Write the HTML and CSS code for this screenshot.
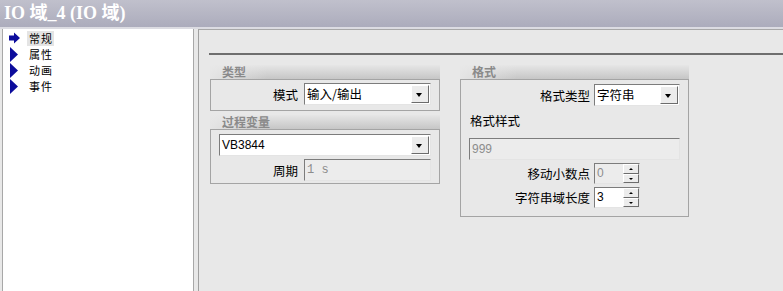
FILE: index.html
```html
<!DOCTYPE html>
<html lang="zh">
<head>
<meta charset="UTF-8">
<title>IO 域_4 (IO 域)</title>
<link rel="stylesheet" href="styles.css">
</head>
<body>
    <div class="titlebar">IO 域_4 (IO 域)</div>
    <div class="main">
        <ul class="tree">
            <li class="tree-item selected">
                <svg class="arrow" width="12" height="12" viewBox="0 0 12 12"><polygon points="0,3.5 5,3.5 5,0.5 11,6 5,11.5 5,8.5 0,8.5" fill="#0c0c9c"/></svg>
                <span>常规</span>
            </li>
            <li class="tree-item">
                <svg class="arrow" width="12" height="15" viewBox="0 0 12 15"><polygon points="1,0 9,7.5 1,15" fill="#0c0c9c"/></svg>
                <span>属性</span>
            </li>
            <li class="tree-item">
                <svg class="arrow" width="12" height="15" viewBox="0 0 12 15"><polygon points="1,0 9,7.5 1,15" fill="#0c0c9c"/></svg>
                <span>动画</span>
            </li>
            <li class="tree-item">
                <svg class="arrow" width="12" height="15" viewBox="0 0 12 15"><polygon points="1,0 9,7.5 1,15" fill="#0c0c9c"/></svg>
                <span>事件</span>
            </li>
        </ul>
        <div class="props">
            <div class="rule"></div>
            <div class="columns">
                <div class="col">
                    <div class="group">
                        <div class="group-head">类型</div>
                        <div class="group-body grid-left">
                            <label class="lbl">模式</label>
                            <div class="select"><span class="val">输入/输出</span><span class="drop"></span></div>
                        </div>
                    </div>
                    <div class="group">
                        <div class="group-head">过程变量</div>
                        <div class="group-body grid-left tight">
                            <div class="select wide"><span class="val latin">VB3844</span><span class="drop"></span></div>
                            <label class="lbl">周期</label>
                            <div class="field disabled mono">1 s</div>
                        </div>
                    </div>
                </div>
                <div class="col">
                    <div class="group">
                        <div class="group-head">格式</div>
                        <div class="group-body grid-right">
                            <label class="lbl">格式类型</label>
                            <div class="select"><span class="val">字符串</span><span class="drop"></span></div>
                            <label class="lbl left wide">格式样式</label>
                            <div class="field disabled latin wide">999</div>
                            <label class="lbl">移动小数点</label>
                            <div class="spin disabled"><span class="val latin">0</span><span class="btns"><span class="up"></span><span class="down"></span></span></div>
                            <label class="lbl">字符串域长度</label>
                            <div class="spin"><span class="val latin">3</span><span class="btns"><span class="up"></span><span class="down"></span></span></div>
                        </div>
                    </div>
                </div>
            </div>
        </div>
    </div>
</body>
</html>
```

FILE: styles.css
```css
body {
    margin: 0;
    padding: 0;
    width: 783px;
    height: 291px;
    overflow: hidden;
    background-color: #e8e8e8;
    font-family: "Noto Sans CJK SC", "DejaVu Sans", sans-serif;
    font-size: 12px;
    color: #000;
}

.titlebar {
    height: 29px;
    line-height: 26px;
    padding-left: 4px;
    box-sizing: border-box;
    background: linear-gradient(to bottom, #c0c0cc, #acacbc);
    border-bottom: 2px solid #dcdce2;
    color: #fff;
    font-family: "Liberation Serif", "Noto Sans CJK SC", serif;
    font-weight: bold;
    font-size: 18px;
}

.main {
    display: flex;
    height: 262px;
}

/* left tree */
.tree {
    list-style: none;
    margin: 0 0 0 2px;
    padding: 1px 0 0 5px;
    width: 185px;
    background: #fff;
    border-left: 1px solid #a8a8a8;
    border-right: 1px solid #a8a8a8;
}

.tree-item {
    display: flex;
    align-items: center;
    height: 16px;
}

.tree-item .arrow {
    margin-left: 1px;
    margin-right: 6px;
    flex: none;
}

.tree-item span {
    display: block;
    height: 15px;
    line-height: 15px;
    padding: 0 1px 0 2px;
    font-size: 11px;
    letter-spacing: 1px;
}

.tree-item.selected span {
    background: #e4e4e4;
}

/* right property area */
.props {
    flex: 1;
    margin-left: 4px;
    border-left: 1px solid #a0a0a0;
    border-top: 1px solid #a8a8a8;
    padding-left: 11px;
}

.rule {
    margin-top: 23px;
    margin-left: -1px;
    border-top: 2px solid #6e6e6e;
    height: 0;
}

.columns {
    display: flex;
    gap: 20px;
    margin-top: 10px;
}

.col {
    display: flex;
    flex-direction: column;
    gap: 4px;
    width: 230px;
}

.col + .col {
    width: 229px;
}

.group-head {
    height: 14px;
    line-height: 14px;
    padding-left: 12px;
    background: linear-gradient(to right, rgba(232, 232, 232, 0.9), rgba(232, 232, 232, 0) 25%),
                linear-gradient(to bottom, #e6e6e6, #c6c6c6);
    color: #8a8a8a;
    font-weight: bold;
    font-size: 12px;
}

.group-body {
    border: 1px solid #a4a4a4;
    padding: 3px 8px 5px 8px;
    display: grid;
    align-items: center;
}

.grid-left {
    grid-template-columns: 1fr 127px;
    column-gap: 6px;
}

.grid-left.tight {
    row-gap: 3px;
    padding-top: 4px;
    padding-bottom: 2px;
}

.grid-right {
    grid-template-columns: 1fr 86px;
    column-gap: 4px;
    row-gap: 3px;
    padding-top: 4px;
    padding-bottom: 8px;
}

.lbl {
    text-align: right;
    white-space: nowrap;
    font-size: 12.5px;
}

.lbl.left {
    text-align: left;
    padding-left: 1px;
    height: 26px;
    line-height: 24px;
}

.wide {
    grid-column: 1 / -1;
}

.latin {
    font-family: "Liberation Sans", Arial, sans-serif;
}

.mono {
    font-family: "Liberation Mono", monospace;
}

/* combo box */
.select {
    display: flex;
    height: 22px;
    box-sizing: border-box;
    border: 1px solid;
    border-color: #7c7c7c #e4e4e4 #e4e4e4 #7c7c7c;
    background: #fff;
}

.select .val {
    flex: 1;
    line-height: 20px;
    padding-left: 2px;
    font-size: 12.5px;
}

.select .val.latin {
    font-size: 12px;
}

.select .drop {
    width: 16px;
    margin: 1px;
    background: #ececec;
    border: 1px solid;
    border-color: #fff #6c6c6c #6c6c6c #fff;
    position: relative;
}

.select .drop::after {
    content: "";
    position: absolute;
    left: 4px;
    top: 7px;
    border-left: 3.5px solid transparent;
    border-right: 3.5px solid transparent;
    border-top: 4px solid #000;
}

/* plain text field */
.field {
    height: 22px;
    box-sizing: border-box;
    border: 1px solid #8c8c8c;
    line-height: 20px;
    padding-left: 2px;
    background: #fff;
}

.field.disabled {
    background: #ececec;
    color: #8c8c8c;
    border-color: #7c7c7c #e4e4e4 #e4e4e4 #7c7c7c;
}

/* spinner */
.spin {
    display: flex;
    width: 46px;
    height: 21px;
    box-sizing: border-box;
    border: 1px solid;
    border-color: #7c7c7c #e4e4e4 #e4e4e4 #7c7c7c;
    background: #fff;
}

.spin.disabled {
    background: #ececec;
    color: #8c8c8c;
}

.spin .val {
    flex: 1;
    padding-left: 2px;
    line-height: 19px;
}

.spin .btns {
    display: flex;
    flex-direction: column;
    width: 16px;
}

.spin .up,
.spin .down {
    flex: 1;
    background: #ececec;
    border: 1px solid;
    border-color: #fff #6c6c6c #6c6c6c #fff;
    position: relative;
}

.spin .up::after,
.spin .down::after {
    content: "";
    position: absolute;
    left: 5px;
    top: 3px;
    border-left: 2px solid transparent;
    border-right: 2px solid transparent;
}

.spin .up::after {
    border-bottom: 2px solid #000;
}

.spin .down::after {
    border-top: 2px solid #000;
}
```
